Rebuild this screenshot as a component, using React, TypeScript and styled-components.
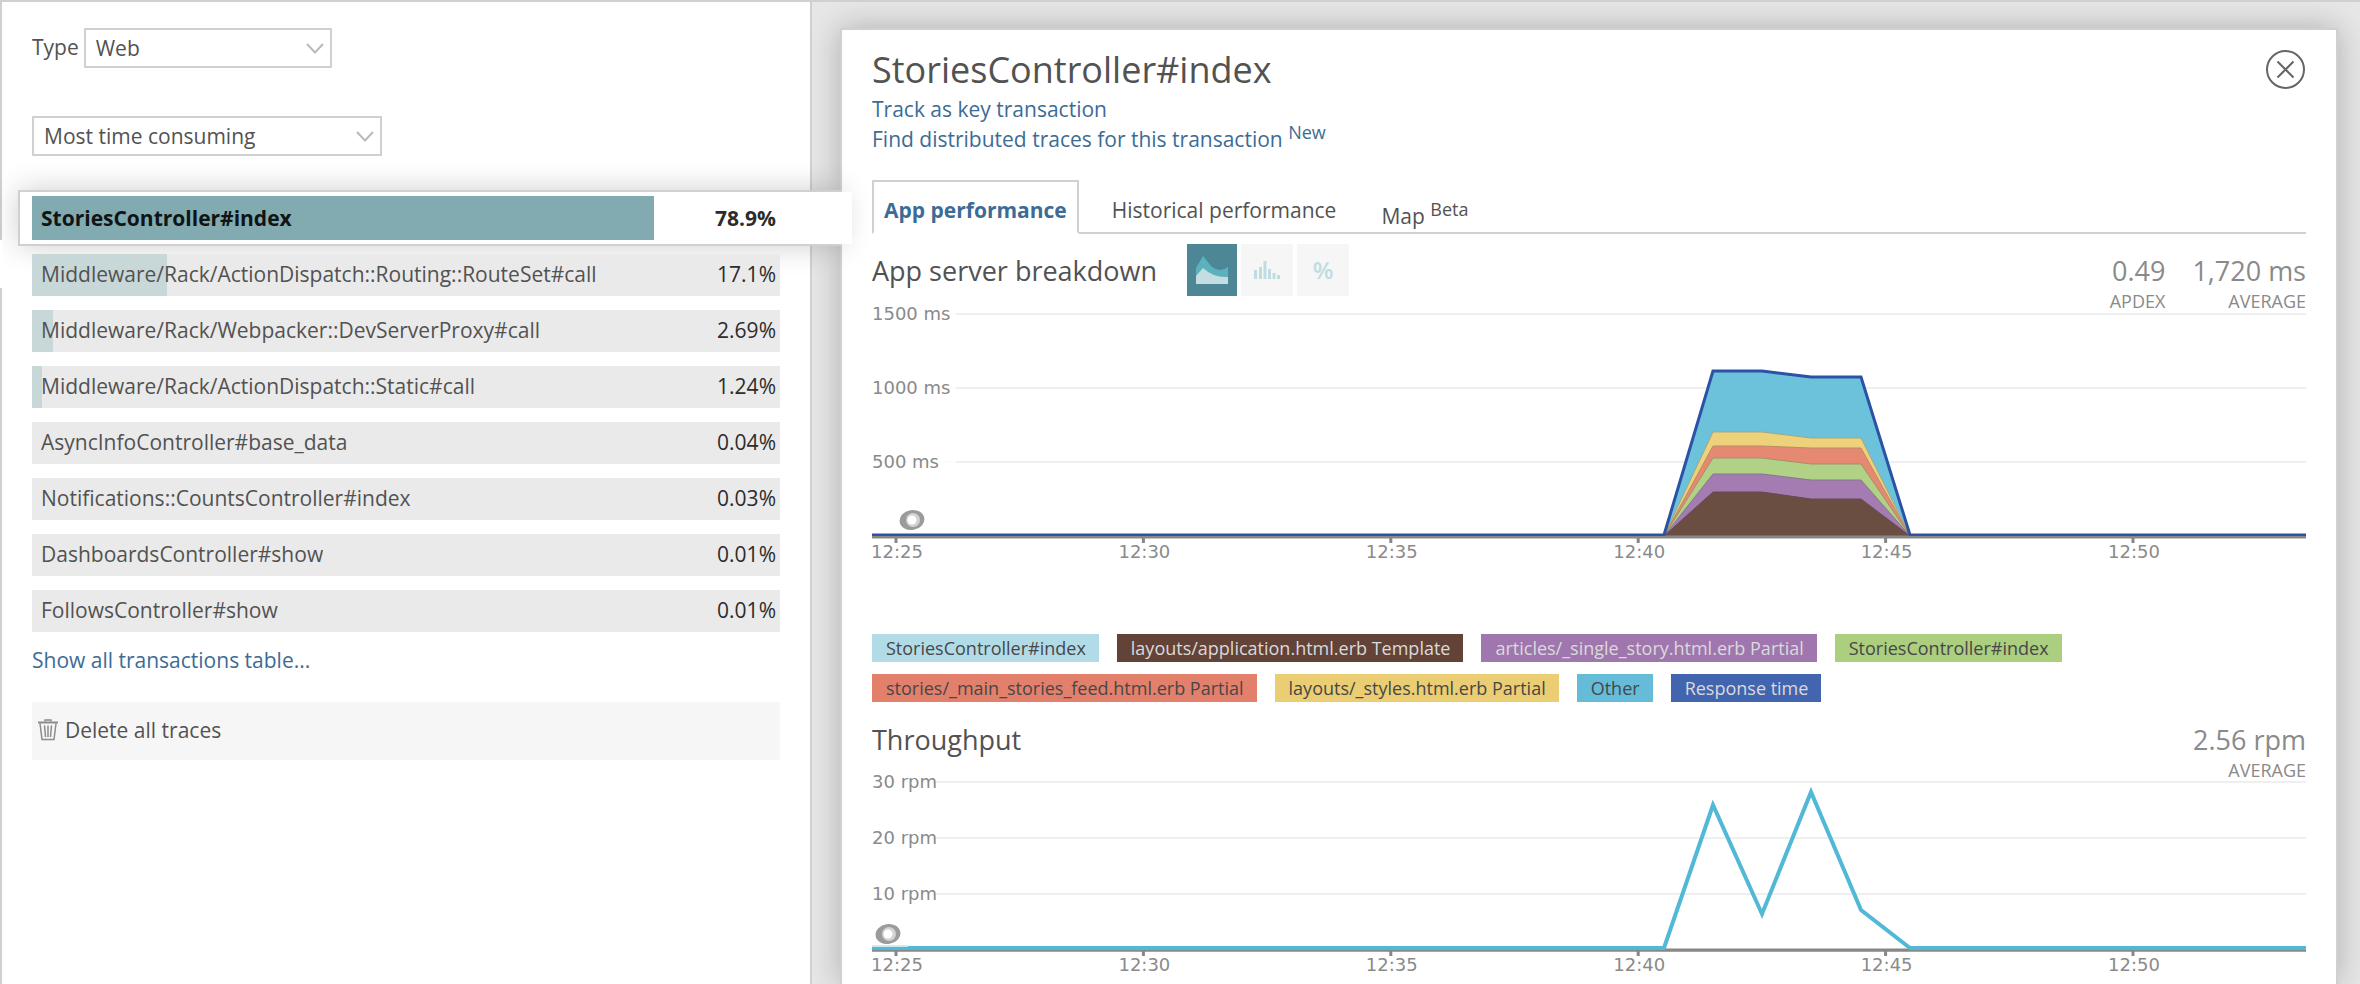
import React from "react";
import styled, { createGlobalStyle } from "styled-components";

const color = {
  text: "#525252",
  strong: "#2c2c2c",
  muted: "#8a8a8a",
  link: "#3c6c95",
  line: "#d0d0d0",
  backdrop: "#e7e7e7",
  teal: "#81aab1",
};

const GlobalStyle = createGlobalStyle`
  *, *::before, *::after { box-sizing: border-box; }
  body {
    margin: 0;
    background: ${color.backdrop};
    color: ${color.text};
    font: 21px/30px "Open Sans", "Noto Sans", sans-serif;
  }
  a { color: ${color.link}; text-decoration: none; }
  button, select { font: inherit; color: inherit; }
  h1, h2, ul { margin: 0; padding: 0; font-weight: 400; list-style: none; }
`;

const Page = styled.div`
  display: grid;
  grid-template-columns: minmax(0, 812fr) minmax(0, 1548fr);
  min-height: 100vh;
  border-top: 2px solid ${color.line};
  overflow: hidden;
`;

const Sidebar = styled.aside`
  position: relative;
  z-index: 1;
  padding: 26px 30px 30px;
  background: #fff;
  border: solid ${color.line};
  border-width: 0 2px;
`;

const Field = styled.div`
  display: flex;
  align-items: flex-start;
  gap: 5px;
  margin-bottom: 48px;
`;

const FieldLabel = styled.label`
  line-height: 38px;
`;

const SelectBox = styled.div<{ $width: number }>`
  position: relative;
  width: ${(p) => p.$width}px;
  max-width: 100%;

  select {
    appearance: none;
    display: block;
    width: 100%;
    height: 40px;
    padding: 0 40px 0 10px;
    background: #fff;
    border: 2px solid ${color.line};
    border-radius: 0;
  }

  svg {
    position: absolute;
    top: 15px;
    right: 8px;
    pointer-events: none;
  }
`;

const TransactionList = styled.ul`
  display: flex;
  flex-direction: column;
  gap: 14px;
  margin-top: 34px;
`;

const Transaction = styled.a<{ $selected?: boolean }>`
  position: relative;
  display: block;
  color: ${color.text};
  ${(p) =>
    p.$selected &&
    `
    margin: 0 -62px -6px -14px;
    padding: 4px 60px 4px 12px;
    background: #fff;
    border: solid ${color.line};
    border-width: 2px 0 2px 2px;
    box-shadow: 0 0 30px rgba(0, 0, 0, 0.2);
    color: #101414;
    font-weight: 700;

    &::after {
      content: "";
      position: absolute;
      top: 0;
      bottom: 0;
      left: 100%;
      width: 10px;
      background: #fff;
      box-shadow: 8px 0 16px -4px rgba(0, 0, 0, 0.06);
    }
    &::before {
      content: "";
      position: absolute;
      top: 48px;
      left: -20px;
      width: 2px;
      height: 48px;
      background: #fff;
    }
  `}
`;

const Track = styled.span<{ $selected?: boolean }>`
  position: relative;
  display: flex;
  align-items: center;
  justify-content: space-between;
  height: ${(p) => (p.$selected ? 44 : 42)}px;
  margin-right: ${(p) => (p.$selected ? 2 : 0)}px;
  padding: 0 4px ${(p) => (p.$selected ? 0 : 2)}px 9px;
  background: ${(p) => (p.$selected ? "#fff" : "#eaeaea")};
`;

const Fill = styled.span<{ $selected?: boolean }>`
  position: absolute;
  inset: 0 auto 0 0;
  background: ${(p) => (p.$selected ? color.teal : "#c8d8d8")};
`;

const Name = styled.span`
  position: relative;
  overflow: hidden;
  white-space: nowrap;
  text-overflow: ellipsis;
`;

const Share = styled.span`
  position: relative;
  color: ${color.strong};
`;

const ShowAll = styled.a`
  display: block;
  margin-top: 13px;
`;

const DeleteButton = styled.button`
  display: flex;
  align-items: center;
  gap: 6px;
  width: 100%;
  height: 58px;
  margin-top: 27px;
  padding: 0 0 2px 5px;
  background: #f6f6f6;
  border: 0;
  cursor: pointer;
`;

const Card = styled.main`
  margin: 26px 22px 0 28px;
  padding: 16px 30px 4px;
  background: #fff;
  border: solid ${color.line};
  border-width: 2px 2px 0;
  box-shadow: 0 0 30px rgba(0, 0, 0, 0.25);
`;

const CardHeader = styled.header`
  display: flex;
  align-items: flex-start;
  justify-content: space-between;
`;

const Title = styled.h1`
  font-size: 36px;
  line-height: 48px;
`;

const HeaderLink = styled.a`
  display: block;
`;

const Sup = styled.sup`
  font-size: 18px;
  line-height: 0;
  vertical-align: 8px;
`;

const CloseButton = styled.button`
  display: flex;
  margin-top: 4px;
  padding: 0;
  background: none;
  border: 0;
  cursor: pointer;
`;

const Tabs = styled.nav`
  display: flex;
  gap: 21px;
  height: 54px;
  margin-top: 26px;
  border-bottom: 2px solid ${color.line};
`;

const Tab = styled.button<{ $active?: boolean; $low?: boolean }>`
  height: 54px;
  padding: ${(p) => (p.$low ? 19 : 13)}px 10px 0;
  display: flex;
  align-items: flex-start;
  background: ${(p) => (p.$active ? "#fff" : "none")};
  border: 2px solid transparent;
  border-color: ${(p) => (p.$active ? `${color.line} ${color.line} #fff` : "transparent")};
  color: ${(p) => (p.$active ? color.link : color.text)};
  font-weight: ${(p) => (p.$active ? 700 : 400)};
  white-space: pre;
  cursor: pointer;
`;

const SectionHeader = styled.div`
  display: flex;
  align-items: flex-start;
  height: 52px;
  margin-top: 10px;
`;

const SectionTitle = styled.h2`
  font-size: 27px;
  line-height: 54px;
`;

const ModeGroup = styled.div`
  display: flex;
  gap: 4px;
  margin-left: 30px;
`;

const ModeButton = styled.button<{ $active?: boolean }>`
  display: grid;
  place-items: center;
  width: ${(p) => (p.$active ? 50 : 52)}px;
  height: 52px;
  padding: 0;
  background: ${(p) => (p.$active ? "#4d8795" : "#f6f6f6")};
  border: 0;
  color: #bfdde1;
  font-size: 24px;
  font-weight: 600;
  cursor: pointer;
`;

const Stats = styled.div`
  display: flex;
  gap: 27px;
  margin: 9px 0 0 auto;
`;

const Stat = styled.div`
  display: flex;
  flex-direction: column;
  color: ${color.muted};
  text-align: right;
  font-size: 27px;
  line-height: 36px;
`;

const StatLabel = styled.span`
  font-size: 18px;
  line-height: 24px;
`;

const ChartSvg = styled.svg`
  display: block;
  width: 100%;
  height: auto;
  overflow: visible;

  text {
    fill: ${color.muted};
    font: 18px "DejaVu Sans", sans-serif;
  }
`;

const Legend = styled.ul`
  display: flex;
  flex-wrap: wrap;
  gap: 12px 18px;
  max-width: 1240px;
  margin: 66px 0 11px;
`;

const LegendItem = styled.li<{ $bg: string; $light?: boolean }>`
  padding: 0 13px 0 14px;
  background: ${(p) => p.$bg};
  color: ${(p) => (p.$light ? "#dadada" : "#474747")};
  font-size: 18px;
  line-height: 28px;
`;

const transactions = [
  { name: "StoriesController#index", share: "78.9", selected: true },
  { name: "Middleware/Rack/ActionDispatch::Routing::RouteSet#call", share: "17.1" },
  { name: "Middleware/Rack/Webpacker::DevServerProxy#call", share: "2.69" },
  { name: "Middleware/Rack/ActionDispatch::Static#call", share: "1.24" },
  { name: "AsyncInfoController#base_data", share: "0.04" },
  { name: "Notifications::CountsController#index", share: "0.03" },
  { name: "DashboardsController#show", share: "0.01" },
  { name: "FollowsController#show", share: "0.01" },
];

/* Bars are scaled so that a share of 95% fills the whole track. */
const barWidth = (share: string) => (Number(share) < 0.1 ? "0" : `${Number(share) / 0.949}%`);

const legend = [
  { label: "StoriesController#index", bg: "#b1dce7" },
  { label: "layouts/application.html.erb Template", bg: "#634338", light: true },
  { label: "articles/_single_story.html.erb Partial", bg: "#a076ae", light: true },
  { label: "StoriesController#index", bg: "#abce7f" },
  { label: "stories/_main_stories_feed.html.erb Partial", bg: "#e3806b" },
  { label: "layouts/_styles.html.erb Partial", bg: "#ebce73" },
  { label: "Other", bg: "#65bcd8" },
  { label: "Response time", bg: "#4265b0", light: true },
];

const minuteX = [792, 841, 890, 939, 989, 1038];

/* Upper edges of the stacked layers at the four sampled minutes, top layer first. */
const layers = [
  { fill: "#6dc2db", stroke: "#5fa5bb", y: [75, 75, 81, 81] },
  { fill: "#edd27b", stroke: "#a3a684", y: [136, 136, 142, 142] },
  { fill: "#e58972", stroke: "#bb8c63", y: [150, 150, 152, 152] },
  { fill: "#b1d187", stroke: "#a39069", y: [162, 162, 168, 168] },
  { fill: "#a47cb1", stroke: "#857989", y: [178, 178, 184, 184] },
  { fill: "#6b4e42", stroke: "#664a55", y: [196, 196, 203, 203] },
];

const outline = (ys: number[], base: number) =>
  [base, ...ys, base].map((y, i) => `${minuteX[i]},${y}`).join(" ");

const ticks = ["12:25", "12:30", "12:35", "12:40", "12:45", "12:50"];

function Chevron() {
  return (
    <svg width="18" height="12" viewBox="0 0 18 12" fill="none" stroke="#bababa" strokeWidth="2" aria-hidden="true">
      <path d="M1 1 9 9.500 17 1" />
    </svg>
  );
}

function Grid({ rows, labelWidth }: { rows: { y: number; label: string }[]; labelWidth: number }) {
  return (
    <>
      {rows.map((r) => (
        <g key={r.label}>
          <path d={`M0 ${r.y}H1434`} stroke="#efefef" strokeWidth="2" />
          <rect x="0" y={r.y - 10} width={labelWidth} height="20" fill="#fff" opacity="0.8" />
          <text x="0" y={r.y + 6}>
            {r.label}
          </text>
        </g>
      ))}
    </>
  );
}

function TimeAxis({ y }: { y: number }) {
  return (
    <>
      <path d={`M0 ${y}H1434`} stroke="#878787" strokeWidth="3" />
      {ticks.map((t, i) => {
        const x = 24 + i * 247.4;
        return (
          <g key={t}>
            <path d={`M${x} ${y}v6`} stroke="#878787" strokeWidth="3" />
            <text x={x + 1} y={y + 21} textAnchor="middle">
              {t}
            </text>
          </g>
        );
      })}
    </>
  );
}

function Marker({ x, y }: { x: number; y: number }) {
  return (
    <g transform={`translate(${x} ${y})`}>
      <ellipse rx="12.500" ry="10" fill="#9b9b9b" transform="rotate(-10)" />
      <circle cx="1" r="7" fill="#d3d3d3" />
      <circle cx="0" r="4.500" fill="#fff" />
    </g>
  );
}

function BreakdownChart() {
  return (
    <ChartSvg viewBox="0 0 1434 272" role="img" aria-label="App server breakdown">
      <Grid
        labelWidth={84}
        rows={[
          { y: 18, label: "1500 ms" },
          { y: 92, label: "1000 ms" },
          { y: 166, label: "500 ms" },
        ]}
      />
      {layers.map((l) => (
        <polygon key={l.fill} points={outline(l.y, 240)} fill={l.fill} stroke={l.stroke} strokeWidth="1" />
      ))}
      <TimeAxis y={241} />
      <polyline
        points={`0,239 ${outline(layers[0].y, 239)} 1434,239`}
        fill="none"
        stroke="#2b52a5"
        strokeWidth="3"
      />
      <path d="M0 241H1434" stroke="#878787" strokeWidth="2" />
      <Marker x={40} y={224} />
    </ChartSvg>
  );
}

function ThroughputChart() {
  return (
    <ChartSvg viewBox="0 0 1434 211" role="img" aria-label="Throughput">
      <Grid
        labelWidth={64}
        rows={[
          { y: 17, label: "30 rpm" },
          { y: 73, label: "20 rpm" },
          { y: 129, label: "10 rpm" },
        ]}
      />
      <TimeAxis y={185} />
      <polyline
        points={`0,183 ${outline([40, 149, 27, 145], 183)} 1434,183`}
        fill="none"
        stroke="#51b8d6"
        strokeWidth="4"
      />
      <path d="M0 181H36" stroke="#cdeaf3" strokeWidth="2" />
      <path d="M0 186H1434" stroke="#878787" strokeWidth="1" />
      <Marker x={16} y={169} />
    </ChartSvg>
  );
}

export default function App() {
  return (
    <>
      <GlobalStyle />
      <Page>
        <Sidebar>
          <Field>
            <FieldLabel htmlFor="type">Type</FieldLabel>
            <SelectBox $width={248}>
              <select id="type" defaultValue="Web">
                <option>Web</option>
              </select>
              <Chevron />
            </SelectBox>
          </Field>
          <SelectBox $width={350}>
            <select aria-label="Sort by" defaultValue="Most time consuming">
              <option>Most time consuming</option>
            </select>
            <Chevron />
          </SelectBox>
          <TransactionList>
            {transactions.map((t) => (
              <li key={t.name}>
                <Transaction href="#transaction" $selected={t.selected}>
                  <Track $selected={t.selected}>
                    <Fill $selected={t.selected} style={{ width: barWidth(t.share) }} />
                    <Name>{t.name}</Name>
                    <Share>{t.share}%</Share>
                  </Track>
                </Transaction>
              </li>
            ))}
          </TransactionList>
          <ShowAll href="#all">Show all transactions table...</ShowAll>
          <DeleteButton type="button">
            <svg width="22" height="22" viewBox="0 0 22 22" fill="none" stroke="#8c8c8c" strokeWidth="1.500" aria-hidden="true">
              <path d="M8 2.500V1h6v1.500" />
              <path d="M1 3.500H21" strokeWidth="2" />
              <path d="M3 4.500 5 20.500H17L19 4.500" />
              <path d="M7.500 6.500 8.500 18M11 6.500V18M14.500 6.500 13.500 18" />
            </svg>
            Delete all traces
          </DeleteButton>
        </Sidebar>

        <Card>
          <CardHeader>
            <div>
              <Title>StoriesController#index</Title>
              <HeaderLink href="#track">Track as key transaction</HeaderLink>
              <HeaderLink href="#traces">
                Find distributed traces for this transaction <Sup>New</Sup>
              </HeaderLink>
            </div>
            <CloseButton type="button" aria-label="Close">
              <svg width="40" height="40" viewBox="0 0 40 40" fill="none" stroke="#666" strokeWidth="2" aria-hidden="true">
                <circle cx="19.500" cy="19.500" r="18.500" />
                <path d="M11.500 11.500 27.500 27.500M27.500 11.500 11.500 27.500" />
              </svg>
            </CloseButton>
          </CardHeader>

          <Tabs>
            <Tab type="button" $active>
              App performance
            </Tab>
            <Tab type="button">Historical performance</Tab>
            <Tab type="button" $low>
              <span>
                Map <Sup>Beta</Sup>
              </span>
            </Tab>
          </Tabs>

          <SectionHeader>
            <SectionTitle>App server breakdown</SectionTitle>
            <ModeGroup>
              <ModeButton type="button" $active aria-label="Area chart">
                <svg width="32" height="28" viewBox="0 0 32 28" aria-hidden="true">
                  <path d="M0 12 7 0 16 11Q24 17 32 11V27H0Z" fill="#5bb1bd" />
                  <path d="M0 20 7 12Q18 22 32 21V28H0Z" fill="#c3dde2" />
                </svg>
              </ModeButton>
              <ModeButton type="button" aria-label="Histogram">
                <svg width="26" height="20" viewBox="0 0 26 20" fill="currentColor" aria-hidden="true">
                  <path d="M0 10h3v9H0zM5 7h3v12H5zM9.500 1h3v18h-3zM14 9h3v10h-3zM18.500 13h3v6h-3zM23 15h3v4h-3z" />
                </svg>
              </ModeButton>
              <ModeButton type="button">%</ModeButton>
            </ModeGroup>
            <Stats>
              <Stat>
                0.49<StatLabel>APDEX</StatLabel>
              </Stat>
              <Stat>
                1,720 ms<StatLabel>AVERAGE</StatLabel>
              </Stat>
            </Stats>
          </SectionHeader>
          <BreakdownChart />

          <Legend>
            {legend.map((l) => (
              <LegendItem key={l.bg} $bg={l.bg} $light={l.light}>
                {l.label}
              </LegendItem>
            ))}
          </Legend>

          <SectionHeader>
            <SectionTitle>Throughput</SectionTitle>
            <Stats>
              <Stat>
                2.56 rpm<StatLabel>AVERAGE</StatLabel>
              </Stat>
            </Stats>
          </SectionHeader>
          <ThroughputChart />
        </Card>
      </Page>
    </>
  );
}
